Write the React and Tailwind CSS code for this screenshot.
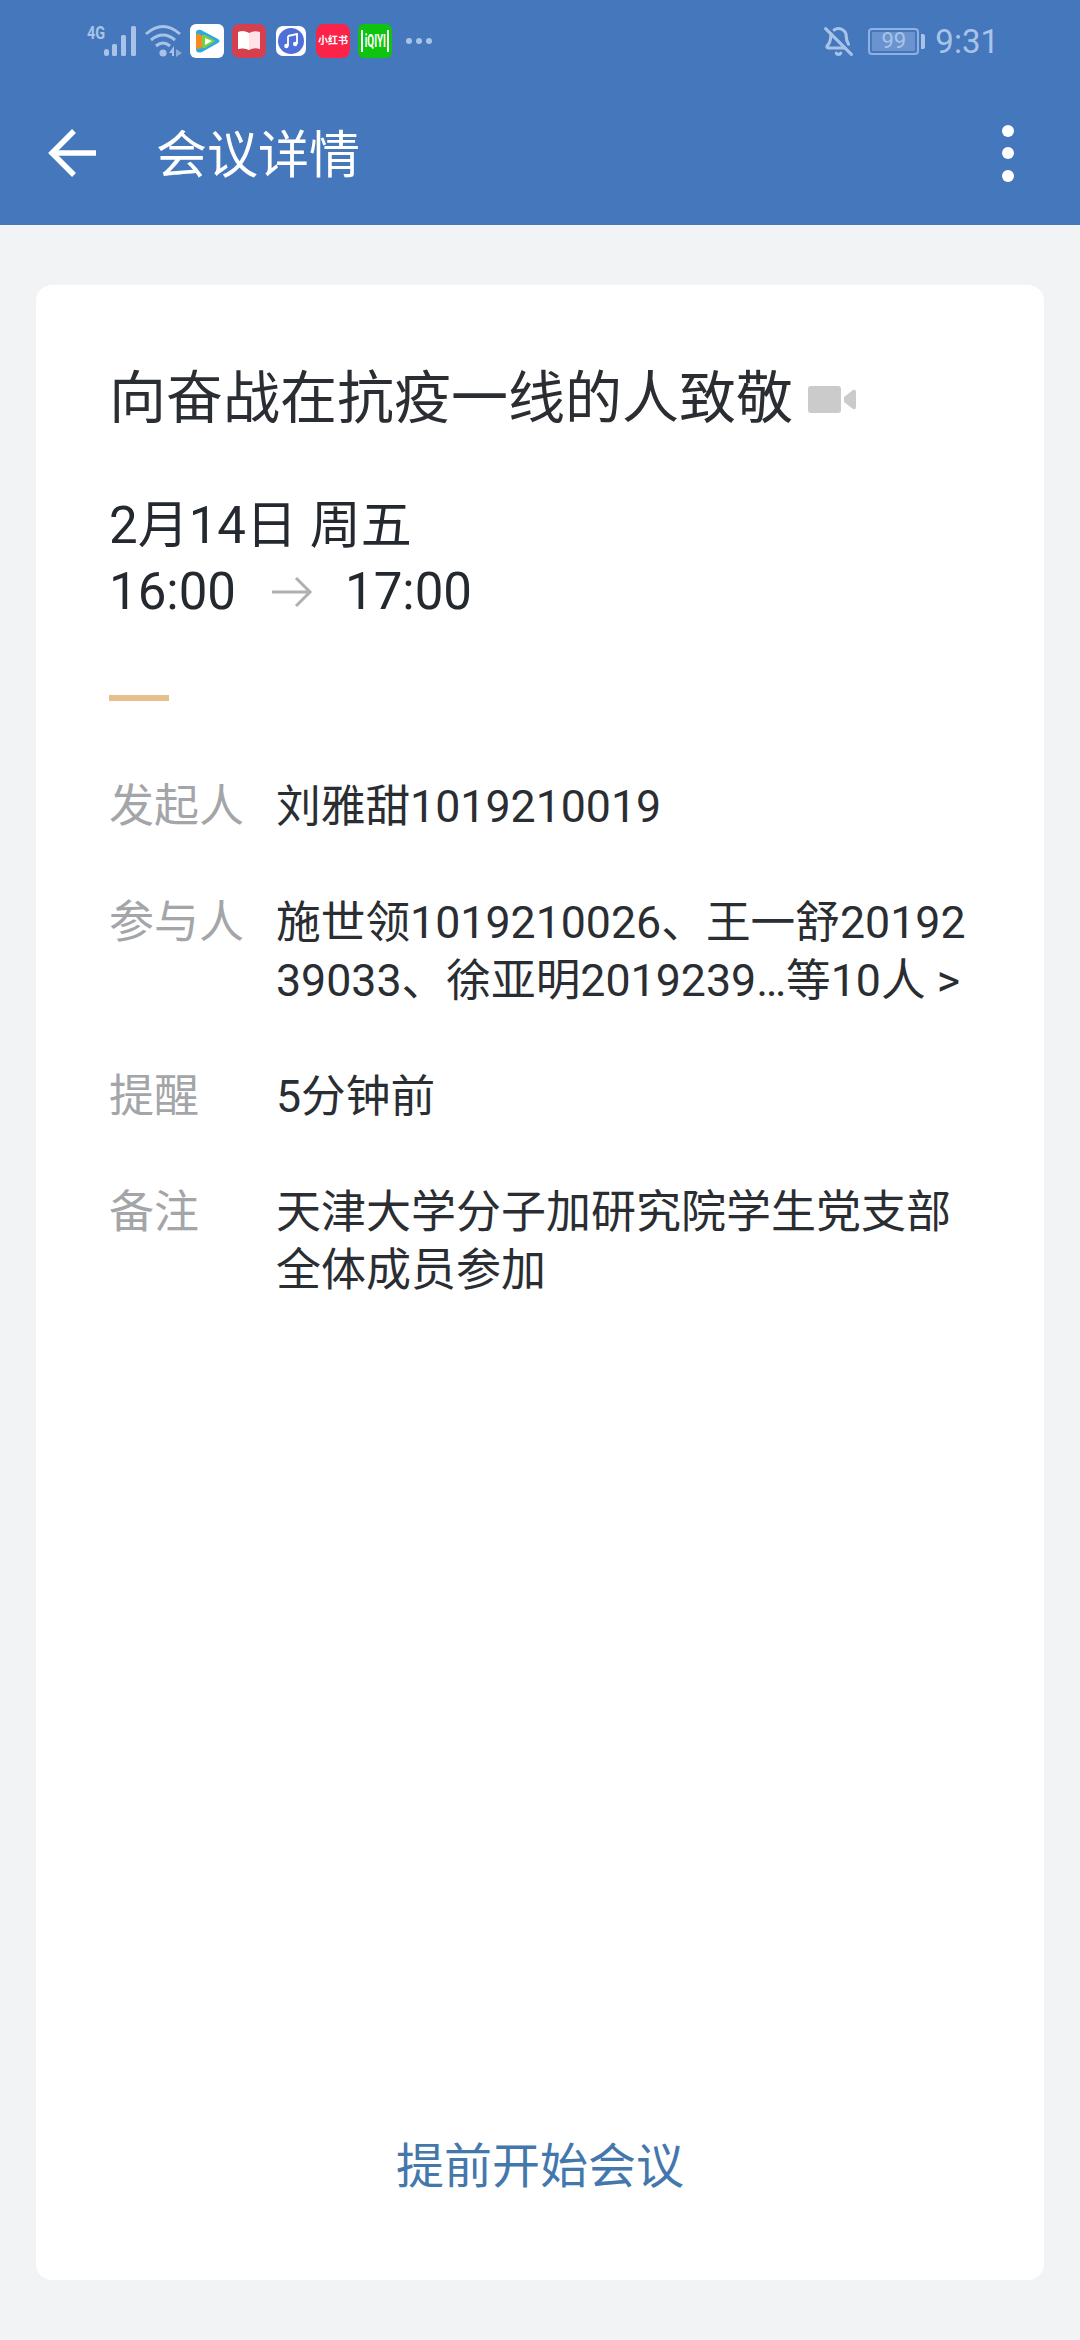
import React from 'react';
import { BellOff } from 'lucide-react';

const font = { fontFamily: 'Roboto, "Noto Sans CJK SC", sans-serif' };

const Row = ({ label, children }) => (
  <div className="flex">
    <div className="w-[167px] shrink-0 text-[45px] leading-[58px] text-[#a3a5a8]">{label}</div>
    <div className="w-[700px] text-[44.7px] leading-[58px] text-[#2a2e33] break-all">{children}</div>
  </div>
);

const StatusIcons = () => (
  <div className="flex items-center">
    <div className="flex h-[34px] w-[34px] items-center justify-center rounded-[6px] bg-white">
      <svg width="28" height="26" viewBox="0 0 28 26">
        <path d="M3 5 Q3 1 8 2 L25 11 Q28 13 25 15 L9 24 Q3 26 3 21 Z" fill="#2fa7e0" />
        <path d="M3 8 Q3 5 6 6 L12 10 L12 17 L6 21 Q3 22 3 19 Z" fill="#f58a1f" />
        <path d="M9 8 Q9 6 12 7 L21 12 Q23 13 21 14 L12 20 Q9 21 9 18 Z" fill="#7ccf3d" />
        <path d="M12 10 L19 13 L12 17 Z" fill="#ffffff" />
      </svg>
    </div>
    <div className="ml-[8px] flex h-[34px] w-[34px] items-center justify-center rounded-[7px] bg-[#d5404f]">
      <svg width="26" height="24" viewBox="0 0 26 24">
        <path d="M2 3 Q8 1 13 4 Q18 1 24 3 L24 20 Q18 18 13 21 Q8 18 2 20 Z" fill="#ffe3e6" />
        <path d="M13 4 L13 21 Q8 18 2 20 L2 3 Q8 1 13 4 Z" fill="#ffffff" />
      </svg>
    </div>
    <div className="ml-[10px] flex h-[30px] w-[30px] items-center justify-center rounded-[7px] bg-white">
      <div className="flex h-[26px] w-[26px] items-center justify-center rounded-full bg-[#4f6fd8]">
        <svg width="16" height="16" viewBox="0 0 16 16">
          <path d="M5 3 L14 1 L14 11 M5 3 L5 13" stroke="#fff" strokeWidth="1.8" fill="none" />
          <circle cx="3.4" cy="13" r="2.2" fill="#fff" />
          <circle cx="12.2" cy="11" r="2.2" fill="#fff" />
        </svg>
      </div>
    </div>
    <div className="ml-[10px] flex h-[34px] w-[34px] items-center justify-center rounded-[8px] bg-[#fb2448] text-[10px] leading-none font-bold whitespace-nowrap text-white">
      小红书
    </div>
    <div className="ml-[8px] flex h-[34px] w-[34px] items-center justify-center rounded-[6px] bg-[#0fc40f]">
      <div className="flex h-[22px] w-[28px] items-center justify-center border-x-2 border-white">
        <span className="scale-x-[0.55] text-[18px] leading-none font-bold text-white">iQIYI</span>
      </div>
    </div>
  </div>
);

const App = () => {
  return (
    <div className="flex h-[2340px] w-[1080px] flex-col overflow-hidden bg-[#f1f3f5]" style={font}>
      {/* 顶栏 */}
      <div className="h-[225px] shrink-0 bg-[#4477bc]">
        <div className="flex h-[70px] items-center justify-between pt-[12px] pr-[81px] pl-[87px]">
          <div className="flex items-center">
            <div className="flex h-[34px] items-start text-[#a9c3e8]">
              <span className="w-[17px] origin-left scale-x-[0.8] text-[18px] leading-[18px] font-bold whitespace-nowrap">4G</span>
              <svg width="33" height="34" viewBox="0 0 33 34">
                <rect x="0" y="25" width="5" height="7" rx="2.5" fill="currentColor" />
                <rect x="8" y="20" width="5" height="12" rx="1.5" fill="currentColor" />
                <rect x="17" y="11" width="5" height="21" rx="1.5" fill="currentColor" />
                <rect x="27" y="2" width="5" height="30" rx="1.5" fill="currentColor" />
              </svg>
            </div>
            <svg width="38" height="34" viewBox="0 0 38 34" className="mr-[7px] ml-[8px] text-[#a9c3e8]" fill="none">
              <path d="M1 10 Q18 -5 35 10" stroke="currentColor" strokeWidth="3" />
              <path d="M6 16 Q18 6 30 16" stroke="currentColor" strokeWidth="3" />
              <path d="M11 22 Q18 16 25 22" stroke="currentColor" strokeWidth="3" />
              <circle cx="18" cy="29" r="3.6" fill="currentColor" />
              <path d="M24 29 L29 22 L29 32 L27 32 L27 29 Z" fill="currentColor" />
              <path d="M31 25 L37 29 L31 33 Z" fill="currentColor" opacity="0.7" />
            </svg>
            <StatusIcons />
            <div className="ml-[14px] flex gap-[4px]">
              <div className="h-[6px] w-[6px] rounded-full bg-[#a9c3e8]" />
              <div className="h-[6px] w-[6px] rounded-full bg-[#a9c3e8]" />
              <div className="h-[6px] w-[6px] rounded-full bg-[#a9c3e8]" />
            </div>
          </div>
          <div className="flex items-center text-[#a9c3e8]">
            <BellOff size={31} strokeWidth={2.4} className="mr-[14px]" />
            <div className="flex items-center">
              <div className="flex h-[27px] w-[51px] rounded-[4px] border-2 border-[#8fb0e0] p-[2px]">
                <div className="flex flex-1 items-center justify-center rounded-[1px] bg-[#6a93cf] text-[22px] leading-none">99</div>
              </div>
              <div className="ml-[2px] h-[15px] w-[4px] rounded-r-[2px] bg-[#a9c3e8]" />
            </div>
            <div className="ml-[10px] text-[33px] leading-none">9:31</div>
          </div>
        </div>
        <div className="flex h-[155px] items-center justify-between pt-[11px] pr-[66px] pl-[48px]">
          <div className="flex items-center">
            <svg width="48" height="48" viewBox="0 0 48 48" fill="none" stroke="#fff" strokeWidth="5.5">
              <path d="M48 24 H4" />
              <path d="M26 2 L4 24 L26 46" />
            </svg>
            <div className="mt-[5px] ml-[60px] text-[51px] leading-none text-white">会议详情</div>
          </div>
          <div className="flex w-[12px] flex-col items-center gap-[10.5px]">
            <div className="h-[12px] w-[12px] rounded-full bg-white" />
            <div className="h-[12px] w-[12px] rounded-full bg-white" />
            <div className="h-[12px] w-[12px] rounded-full bg-white" />
          </div>
        </div>
      </div>

      {/* 会议卡片 */}
      <div className="mx-[36px] mt-[60px] flex h-[1995px] flex-col rounded-[16px] bg-white pt-[78px] pl-[73px]">
        <div className="flex items-center">
          <div className="text-[57px] leading-[72px] text-[#2a2e33]">向奋战在抗疫一线的人致敬</div>
          <svg width="48" height="27" viewBox="0 0 48 27" className="ml-[15px]">
            <rect x="0" y="0" width="33" height="27" rx="3" fill="#cbcbcb" />
            <path d="M36 11 L45 4 Q48 3 48 6 L48 21 Q48 24 45 23 L36 16 Z" fill="#cbcbcb" />
          </svg>
        </div>
        <div className="mt-[62px] text-[51px] leading-[58px] text-[#24292f]">2月14日 周五</div>
        <div className="mt-[8px] flex items-center text-[51px] leading-[58px] text-[#24292f]">
          <span>16:00</span>
          <svg width="42" height="32" viewBox="0 0 42 32" fill="none" stroke="#b0b0b0" strokeWidth="3" className="ml-[35px]">
            <path d="M1 16 H39" />
            <path d="M25 2 L39 16 L25 30" />
          </svg>
          <span className="ml-[32px]">17:00</span>
        </div>
        <div className="mt-[74px] h-[6px] w-[60px] bg-[#e5c08c]" />

        <div className="mt-[77px] flex flex-col gap-[58px]">
          <Row label="发起人">刘雅甜1019210019</Row>
          <Row label="参与人">
            施世领1019210026、王一舒20192
            <br />
            39033、徐亚明2019239…等10人 &gt;
          </Row>
          <Row label="提醒">5分钟前</Row>
          <Row label="备注">
            <span className="text-[45px]">
              天津大学分子加研究院学生党支部
              <br />
              全体成员参加
            </span>
          </Row>
        </div>

        <div className="mt-auto mb-[83px] -ml-[73px] text-center text-[48px] leading-[60px] text-[#4477ac]">提前开始会议</div>
      </div>
    </div>
  );
};

export default App;
